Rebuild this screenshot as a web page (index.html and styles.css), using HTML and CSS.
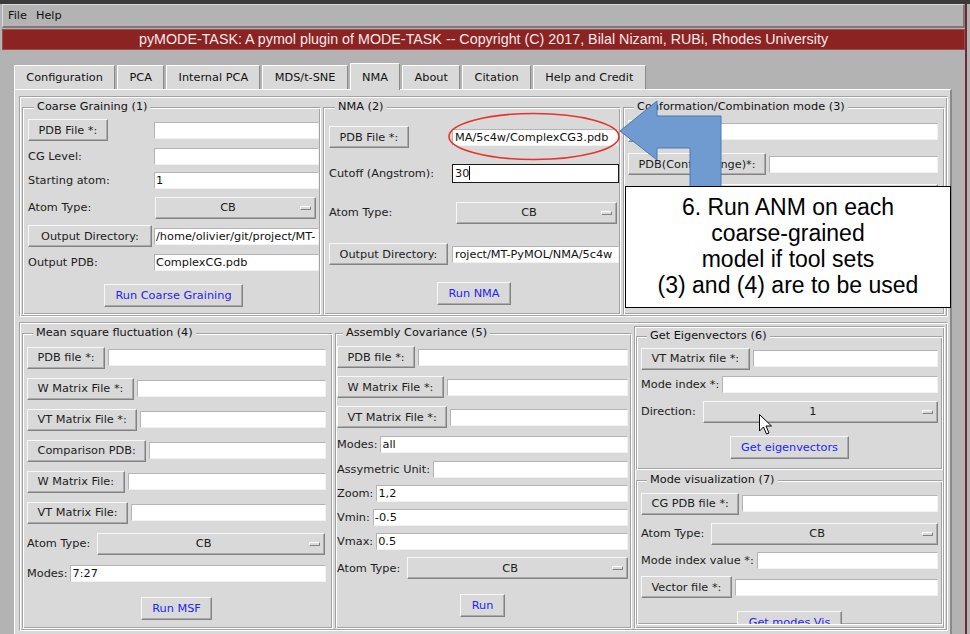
FILE: index.html
```html
<!DOCTYPE html>
<html lang="en">
<head>
<meta charset="utf-8">
<title>pyMODE-TASK</title>
<link rel="stylesheet" href="styles.css">
</head>
<body>
<div class="app">
  <div class="topstrip"></div>
  <div class="window">
    <div class="menubar"><span>File</span><span>Help</span></div>
    <div class="titlebar">pyMODE-TASK: A pymol plugin of MODE-TASK -- Copyright (C) 2017, Bilal Nizami, RUBi, Rhodes University</div>
    <div class="notebook">
      <div class="tabs">
        <div class="tab">Configuration</div>
        <div class="tab">PCA</div>
        <div class="tab">Internal PCA</div>
        <div class="tab">MDS/t-SNE</div>
        <div class="tab selected">NMA</div>
        <div class="tab">About</div>
        <div class="tab">Citation</div>
        <div class="tab">Help and Credit</div>
      </div>
      <div class="pane">
        <div class="frame groove top-frame">
          <fieldset class="lf groove lf-cg">
            <legend>Coarse Graining (1)</legend>
            <div class="grid g-cg">
              <span class="btn">PDB File *:</span><span class="entry"></span>
              <span class="lbl">CG Level:</span><span class="entry"></span>
              <span class="lbl">Starting atom:</span><span class="entry">1</span>
              <span class="lbl">Atom Type:</span><span class="mb"><span class="mb-text">CB</span><span class="mb-ind"></span></span>
              <span class="btn wide">Output Directory:</span><span class="entry">/home/olivier/git/project/MT-</span>
              <span class="lbl">Output PDB:</span><span class="entry">ComplexCG.pdb</span>
              <span class="btn run span2">Run Coarse Graining</span>
            </div>
          </fieldset>
          <fieldset class="lf groove lf-nma">
            <legend>NMA (2)</legend>
            <div class="grid g-nma">
              <span class="btn">PDB File *:</span><span class="entry nma-pdb">MA/5c4w/ComplexCG3.pdb</span>
              <span class="lbl">Cutoff (Angstrom):</span><span class="entry focus nma-cut">30<span class="caret"></span></span>
              <span class="lbl">Atom Type:</span><span class="mb nma-mb"><span class="mb-text">CB</span><span class="mb-ind"></span></span>
              <span class="btn">Output Directory:</span><span class="entry nma-out">roject/MT-PyMOL/NMA/5c4w</span>
              <span class="btn run span2">Run NMA</span>
            </div>
          </fieldset>
          <fieldset class="lf groove lf-conf">
            <legend>Conformation/Combination mode (3)</legend>
            <div class="rows r-conf">
              <div class="row"><span class="btn">PDB(ANM)*:</span><span class="entry"></span></div>
              <div class="row"><span class="btn">PDB(Conf. Change)*:</span><span class="entry"></span></div>
              <div class="row"><span class="lbl">Atom Type:</span><span class="mb"><span class="mb-text">CB</span><span class="mb-ind"></span></span></div>
              <div class="row"><span class="lbl">Mode index *:</span><span class="entry"></span></div>
              <div class="row"><span class="btn">VT Matrix file *:</span><span class="entry"></span></div>
              <div class="row center"><span class="btn run">Run Conformation</span></div>
            </div>
          </fieldset>
        </div>

        <div class="frame groove bottom-frame">
          <fieldset class="lf groove lf-msf">
            <legend>Mean square fluctuation (4)</legend>
            <div class="rows r-msf">
              <div class="row"><span class="btn">PDB file *:</span><span class="entry"></span></div>
              <div class="row"><span class="btn">W Matrix File *:</span><span class="entry"></span></div>
              <div class="row"><span class="btn">VT Matrix File *:</span><span class="entry"></span></div>
              <div class="row"><span class="btn">Comparison PDB:</span><span class="entry"></span></div>
              <div class="row"><span class="btn">W Matrix File:</span><span class="entry"></span></div>
              <div class="row"><span class="btn">VT Matrix File:</span><span class="entry"></span></div>
              <div class="row"><span class="lbl">Atom Type:</span><span class="mb gap-mb"><span class="mb-text">CB</span><span class="mb-ind"></span></span></div>
              <div class="row"><span class="lbl">Modes:</span><span class="entry">7:27</span></div>
              <div class="row center"><span class="btn run">Run MSF</span></div>
            </div>
          </fieldset>
          <fieldset class="lf groove lf-ac">
            <legend>Assembly Covariance (5)</legend>
            <div class="rows r-ac">
              <div class="row"><span class="btn">PDB file *:</span><span class="entry"></span></div>
              <div class="row"><span class="btn">W Matrix File *:</span><span class="entry"></span></div>
              <div class="row"><span class="btn">VT Matrix File *:</span><span class="entry"></span></div>
              <div class="row"><span class="lbl">Modes:</span><span class="entry">all</span></div>
              <div class="row"><span class="lbl">Assymetric Unit:</span><span class="entry"></span></div>
              <div class="row"><span class="lbl">Zoom:</span><span class="entry">1,2</span></div>
              <div class="row"><span class="lbl">Vmin:</span><span class="entry">-0.5</span></div>
              <div class="row"><span class="lbl">Vmax:</span><span class="entry">0.5</span></div>
              <div class="row"><span class="lbl">Atom Type:</span><span class="mb gap-mb"><span class="mb-text">CB</span><span class="mb-ind"></span></span></div>
              <div class="row center"><span class="btn run">Run</span></div>
            </div>
          </fieldset>
          <div class="colframe groove">
            <fieldset class="lf groove lf-eig">
              <legend>Get Eigenvectors (6)</legend>
              <div class="rows r-eig">
                <div class="row"><span class="btn">VT Matrix file *:</span><span class="entry"></span></div>
                <div class="row"><span class="lbl">Mode index *:</span><span class="entry"></span></div>
                <div class="row"><span class="lbl">Direction:</span><span class="mb gap-mb"><span class="mb-text">1</span><span class="mb-ind"></span></span></div>
                <div class="row center"><span class="btn run">Get eigenvectors</span></div>
              </div>
            </fieldset>
            <fieldset class="lf groove lf-vis">
              <legend>Mode visualization (7)</legend>
              <div class="rows r-vis">
                <div class="row"><span class="btn">CG PDB file *:</span><span class="entry"></span></div>
                <div class="row"><span class="lbl">Atom Type:</span><span class="mb gap-mb"><span class="mb-text">CB</span><span class="mb-ind"></span></span></div>
                <div class="row"><span class="lbl">Mode index value *:</span><span class="entry"></span></div>
                <div class="row"><span class="btn">Vector file *:</span><span class="entry"></span></div>
                <div class="row center"><span class="btn run">Get modes Vis</span></div>
              </div>
            </fieldset>
          </div>
        </div>
      </div>
    </div>
  </div>

  <svg class="overlay" width="970" height="634" viewBox="0 0 970 634" aria-hidden="true">
    <ellipse cx="534" cy="136.5" rx="85" ry="23" fill="none" stroke="#e8322c" stroke-width="1.6"/>
    <polygon points="620,131 657,101 657,116 721,116 721,188 690,188 690,148 657,148 657,160" fill="#6f9bd1" stroke="#4a78b3" stroke-width="1"/>
    <path d="M759.5 414.5 L759.5 431 L763.5 427 L766.5 434 L769 433 L766 426 L771.5 426 Z" fill="#fff" stroke="#000" stroke-width="1" stroke-linejoin="round"/>
  </svg>
  <div class="callout">6. Run ANM on each<br>coarse-grained<br>model if tool sets<br>(3) and (4) are to be used</div>
</div>
</body>
</html>
```

FILE: styles.css
```css
* { box-sizing: border-box; }
html, body { margin: 0; padding: 0; }
body {
  background: #b3b3b3;
  font-family: "DejaVu Sans", sans-serif;
  font-size: 11.3px;
  color: #1c1c1c;
}
.app {
  position: relative;
  width: 970px;
  height: 634px;
  overflow: hidden;
  background: #b3b3b3;
}
.topstrip { height: 4px; background: #3b3b3b; }
.window {
  width: 967px;
  height: 630px;
  border-right: 2px solid #6d2b35;
}
.menubar {
  margin-left: 2px;
  height: 24px;
  display: flex;
  align-items: center;
  gap: 9px;
  padding-left: 5px;
  border-top: 1px solid #dadada;
  border-left: 1px solid #dadada;
  border-bottom: 2px solid #7a7a7a;
  border-right: 2px solid #7a7a7a;
  color: #111;
}
.titlebar {
  margin: 1px 0 0 2px;
  height: 21px;
  background: #8b2323;
  border: 1px solid #a24848;
  color: #f3e8e8;
  font-family: "Liberation Sans", Arial, sans-serif;
  font-size: 14.3px;
  line-height: 19px;
  text-align: center;
  white-space: nowrap;
}
.notebook { margin: 13px 0 0 14px; width: 938px; }
.tabs {
  display: flex;
  align-items: flex-end;
  gap: 2px;
  height: 26px;
}
.tab {
  height: 24px;
  padding: 0 11.3px;
  display: flex;
  align-items: center;
  background: #d9d9d9;
  border: 1px solid;
  border-color: #fff #8a8a8a transparent #fff;
  border-bottom: 0;
  white-space: nowrap;
  color: #111;
}
.tab.selected {
  height: 27px;
  margin-bottom: -1px;
  position: relative;
  z-index: 1;
}
.pane {
  height: 560px;
  background: #d9d9d9;
  border-top: 1px solid #fff;
  border-left: 1px solid #fff;
  border-right: 2px solid #8a8a8a;
  padding: 6px 2px 0 4px;
}

/* Tk groove relief */
.groove {
  border: 1px solid;
  border-color: #a3a3a3 #fff #fff #a3a3a3;
  box-shadow: inset 1px 1px 0 #fff, inset -1px -1px 0 #a3a3a3;
}
.frame { display: flex; gap: 2px; padding: 3px 2px 1px 2px; }
.top-frame { height: 221px; }
.bottom-frame { height: 309px; margin-top: 5px; }

.lf { margin: 0; min-width: 0; }
.lf legend {
  margin-left: 6px;
  padding: 0 3px;
  line-height: 14px;
  background: #d9d9d9;
  color: #111;
}
.lf-cg { width: 299px; padding: 3px 1px 0 5px; }
.lf-nma { width: 298px; padding: 3px 1px 0 5px; }
.lf-conf { width: 322px; padding: 3px 6px 0 4px; }
.lf-msf { width: 311px; padding: 2px 6px 0 4px; }
.lf-ac { width: 297px; padding: 2px 3px 0 1px; }
.colframe {
  width: 311px;
  display: flex;
  flex-direction: column;
  gap: 3px;
  padding: 2px 1px 3px 1px;
}
.lf-eig { height: 141px; flex: none; padding: 3px 4px 0 4px; }
.lf-vis { flex: 1 1 0; min-height: 0; overflow: hidden; padding: 3px 4px 0 4px; }

/* layouts */
.grid { display: grid; align-items: center; justify-items: start; }
.grid .entry, .grid .mb { justify-self: stretch; }
.g-cg { grid-template-columns: 126px 1fr; grid-template-rows: 26px 26px 22px 33px 24px 29px 37px; }
.g-cg .mb { margin: 0 3px 0 1px; }
.g-nma { grid-template-columns: 123px 1fr; grid-template-rows: 40px 33px 45px 38px 41px; }
.nma-pdb { margin-right: 1px; }
.nma-mb { margin: 0 2px 0 4px; }
.span2 { grid-column: 1 / -1; justify-self: center; }
.btn.wide { justify-self: stretch; margin-right: 2px; }

.rows { display: grid; }
.r-conf { grid-template-rows: 28px 38px 24px 28px 28px 51px; }
.r-msf { grid-template-rows: repeat(7, 31px) 29px 40px; }
.r-ac { grid-template-rows: 30px 30px 30px 25px 24px 24px 24px 24px 30px 45px; }
.r-eig { grid-template-rows: 25px 27px 27px 44px; }
.r-vis { grid-template-rows: 27px 33px 21px 32px 39px; }
.row { display: flex; align-items: center; gap: 3px; min-width: 0; }
.row.center { justify-content: center; }
.row .entry, .row .mb { flex: 1; min-width: 0; }
.mb.gap-mb { margin-left: 4px; }
.r-msf .mb { margin-right: 1px; }

/* widgets */
.lbl { white-space: nowrap; color: #1c1c1c; }
.btn {
  display: inline-flex;
  align-items: center;
  justify-content: center;
  height: 22px;
  padding: 0 9.5px;
  background: #d9d9d9;
  border: 1px solid;
  border-color: #f8f8f8 #828282 #828282 #f8f8f8;
  box-shadow: inset -1px -1px 0 #ababab;
  white-space: nowrap;
  flex: none;
  color: #1c1c1c;
}
.btn.run { color: #2424f5; height: 23px; padding: 0 10.5px; }
.entry {
  display: block;
  height: 17px;
  background: #fff;
  border: 1px solid;
  border-color: #b4b4b4 #f2f2f2 #f2f2f2 #b4b4b4;
  padding: 0 2px 0 1px;
  line-height: 15px;
  white-space: nowrap;
  overflow: hidden;
  color: #111;
}
.nma-pdb, .nma-out, .nma-cut { padding-left: 2px; }
.entry.focus { border-color: #1a1a1a; height: 19px; line-height: 17px; }
.caret {
  display: inline-block;
  width: 1px;
  height: 14px;
  background: #000;
  vertical-align: -3px;
}
.mb {
  display: flex;
  align-items: center;
  height: 22px;
  background: #d9d9d9;
  border: 1px solid;
  border-color: #f8f8f8 #828282 #828282 #f8f8f8;
  box-shadow: inset -1px -1px 0 #ababab;
  color: #1c1c1c;
}
.mb-text { flex: 1; text-align: center; }
.mb-ind {
  width: 11px;
  height: 4px;
  margin-right: 4px;
  background: #d9d9d9;
  border: 1px solid;
  border-color: #fff #828282 #828282 #fff;
}

/* annotation overlays */
.overlay { position: absolute; left: 0; top: 0; pointer-events: none; }
.callout {
  position: absolute;
  left: 625px;
  top: 186px;
  width: 326px;
  height: 122px;
  border: 1px solid #000;
  background: #fff;
  font-family: "Liberation Sans", Arial, sans-serif;
  font-size: 23px;
  line-height: 26px;
  text-align: center;
  padding-top: 7px;
  color: #000;
}
```
